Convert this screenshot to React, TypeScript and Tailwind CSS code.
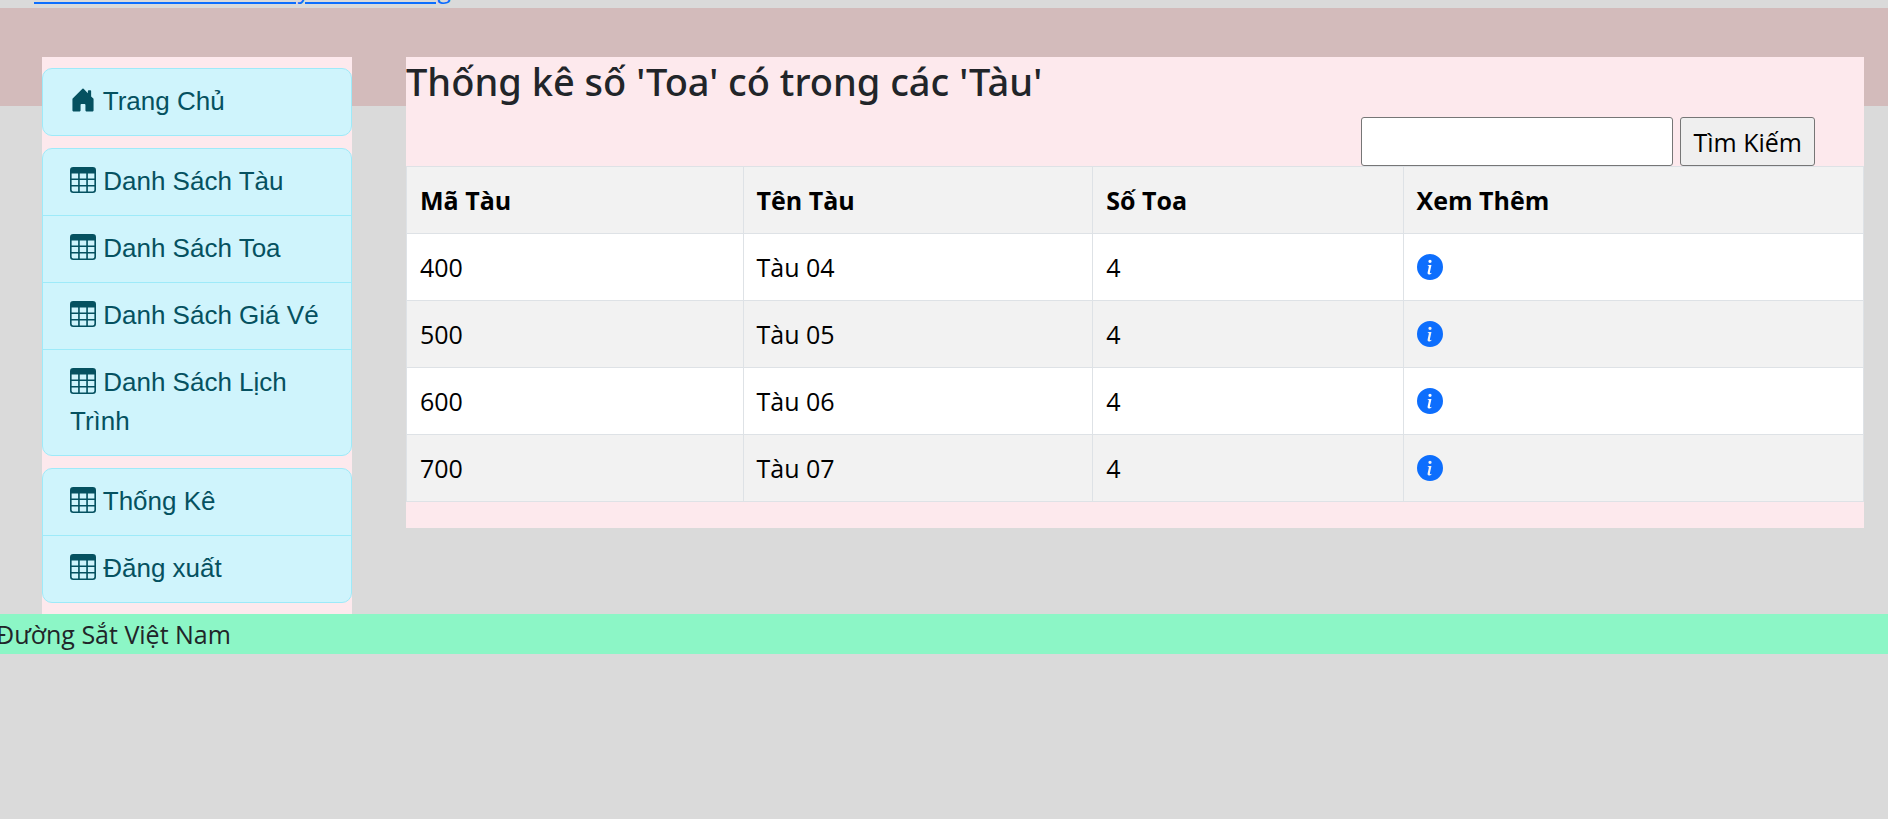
import { BsTable, BsInfoCircleFill } from "react-icons/bs";

const groups = [
  ["Trang Chủ"],
  ["Danh Sách Tàu", "Danh Sách Toa", "Danh Sách Giá Vé", "Danh Sách Lịch Trình"],
  ["Thống Kê", "Đăng xuất"],
];

const trains = [
  { id: "400", name: "Tàu 04", cars: 4 },
  { id: "500", name: "Tàu 05", cars: 4 },
  { id: "600", name: "Tàu 06", cars: 4 },
  { id: "700", name: "Tàu 07", cars: 4 },
];

const cell = "border border-[#dee2e6] px-[13px] py-[13px] text-left";

function HomeIcon() {
  return (
    <svg viewBox="0 0 16 16" fill="currentColor" className="inline-block size-[26px] align-[-3px]" aria-hidden="true">
      <path d="M6.5 14.5v-3.505c0-.245.25-.495.5-.495h2c.25 0 .5.25.5.5v3.5a.5.5 0 0 0 .5.5h4a.5.5 0 0 0 .5-.5v-7a.5.5 0 0 0-.146-.354L13 5.793V2.5a.5.5 0 0 0-.5-.5h-1a.5.5 0 0 0-.5.5v1.293L8.354 1.146a.5.5 0 0 0-.708 0l-6 6A.5.5 0 0 0 1.5 7.5v7a.5.5 0 0 0 .5.5h4a.5.5 0 0 0 .5-.5" />
    </svg>
  );
}

export default function App() {
  return (
    <div className="min-h-screen overflow-x-hidden bg-[#dadada] font-['Open_Sans','Noto_Sans',sans-serif] text-[25px] leading-10 text-[#212529]">
      <div className="flex h-2 items-end overflow-hidden pl-[34px]">
        <a href="#" className="whitespace-nowrap text-[#0d6efd] underline decoration-2 underline-offset-4">
          Danh sách toa - Hành lý khách hàng
        </a>
      </div>
      <div className="bg-[linear-gradient(#d3bbbb_98px,transparent_98px)] pt-[49px]">
        <div className="flex items-start pr-6 pl-[42px]">
          <nav className="mr-[54px] flex w-[310px] shrink-0 flex-col gap-3 bg-[#fde9ed] py-[11px] font-['Liberation_Sans',Arial,sans-serif] text-[26px] leading-[39px] text-[#055160]">
            {groups.map((items) => (
              <ul key={items[0]} className="divide-y divide-[#9eeaf9] rounded-[10px] border border-[#9eeaf9] bg-[#cff4fc]">
                {items.map((item) => (
                  <li key={item}>
                    <a href="#" className="block px-[27px] pt-[13px] pb-[14px]">
                      {item === "Trang Chủ" ? (
                        <HomeIcon />
                      ) : (
                        <BsTable className="inline-block size-[26px] align-[-3px]" />
                      )}{" "}
                      {item}
                    </a>
                  </li>
                ))}
              </ul>
            ))}
          </nav>
          <main className="min-w-0 flex-1 bg-[#fde9ed] pb-[26px]">
            <h1 className="pb-3 font-['Noto_Sans',sans-serif] text-[38px] leading-[48px] font-medium">
              Thống kê số 'Toa' có trong các 'Tàu'
            </h1>
            <form className="flex justify-end gap-[7px] pr-[49px]" onSubmit={(e) => e.preventDefault()}>
              <input
                aria-label="Tìm Kiếm"
                type="text"
                className="h-[49px] w-[312px] rounded-[3px] border border-[#767676] bg-white px-1"
              />
              <button
                type="submit"
                className="h-[49px] rounded-[3px] border border-[#767676] bg-[#efefef] px-3 text-black"
              >
                Tìm Kiếm
              </button>
            </form>
            <table className="w-full table-fixed border-collapse text-black">
              <colgroup>
                <col className="w-[23.1%]" />
                <col className="w-[24%]" />
                <col className="w-[21.3%]" />
                <col />
              </colgroup>
              <thead>
                <tr className="bg-[#f2f2f2]">
                  {["Mã Tàu", "Tên Tàu", "Số Toa", "Xem Thêm"].map((h) => (
                    <th key={h} className={cell}>
                      {h}
                    </th>
                  ))}
                </tr>
              </thead>
              <tbody>
                {trains.map((t) => (
                  <tr key={t.id} className="bg-white even:bg-[#f2f2f2]">
                    <td className={cell}>{t.id}</td>
                    <td className={cell}>{t.name}</td>
                    <td className={cell}>{t.cars}</td>
                    <td className={cell}>
                      <a href="#" aria-label={`Xem thêm ${t.name}`} className="text-[#0d6efd]">
                        <BsInfoCircleFill className="inline-block size-[26px] align-[-3px]" />
                      </a>
                    </td>
                  </tr>
                ))}
              </tbody>
            </table>
          </main>
        </div>
      </div>
      <footer className="overflow-hidden bg-[#8cf6c6]">
        <p className="-ml-1 whitespace-nowrap">Đường Sắt Việt Nam</p>
      </footer>
    </div>
  );
}
